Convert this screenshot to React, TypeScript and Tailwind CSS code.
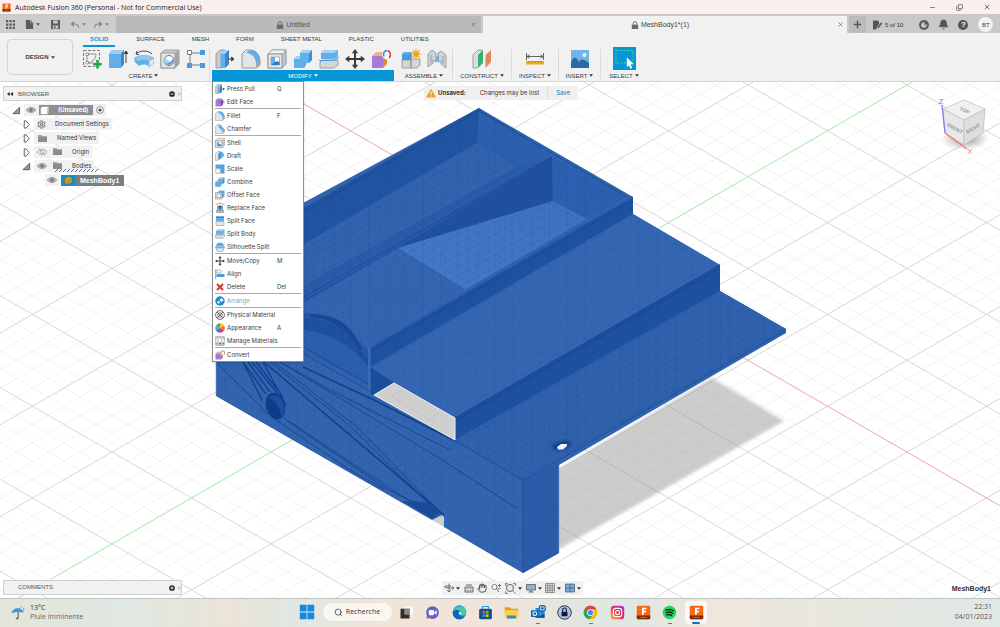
import React from "react";
import { Bell, Search, X, Minus, Copy, Plus, Hand, Settings } from "lucide-react";

type P = { className?: string };

const Svg = ({ className = "size-5", children }: { className?: string; children: React.ReactNode }) => (
  <svg viewBox="0 0 20 20" className={`${className} shrink-0`} aria-hidden="true">
    {children}
  </svg>
);

const B = "#62aee8";
const G = "#c9cbcd";
const D = "#8a8d90";

const icons: Record<string, React.ReactNode> = {
  sketch: (
    <>
      <path d="M1.500 1.500h16v16h-16z" fill="none" stroke="#777" strokeWidth="1" strokeDasharray="3 1.500" />
      <path d="M5 5v9M5 14h9M14 5c0 5-4 9-9 9M5 5h9" fill="none" stroke="#888" strokeWidth=".9" />
      <path d="M4 4h2.500v2.500H4zM4 12.500h2.500V15H4z" fill="#fff" stroke="#777" strokeWidth=".7" />
      <path d="M15.500 11v8.500M11.200 15.200h8.600" stroke="#f1f1f1" strokeWidth="4" />
      <path d="M15.500 11v8.500M11.200 15.200h8.600" stroke="#1fa64a" strokeWidth="2.600" />
    </>
  ),
  extrude: (
    <>
      <path d="M1 5l3-4h12v14l-3 4H1z" fill="#3d87c7" />
      <path d="M1 5l3-4h12l-3 4z" fill="#9ccdf2" />
      <path d="M1 5h12v14H1z" fill={B} />
      <path d="M18 3v11M16.300 4.500L18 2l1.700 2.500z" fill="#333" stroke="#333" strokeWidth=".9" />
    </>
  ),
  revolve: (
    <>
      <path d="M2 5c4-4 12-4 16 0M2 5l1-3M2 5l3 .5" fill="none" stroke="#444" strokeWidth="1" />
      <path d="M0 9c5-4 15-4 20 0v4l-5 4c-3-2-7-2-10 0l-4-4z" fill={B} />
      <path d="M0 9c5-4 15-4 20 0l-4 3c-4-2-8-2-12 0z" fill="#91c7ef" />
      <path d="M15 12l5-3v5l-5 4z" fill="#e9eaeb" stroke="#999" strokeWidth=".6" />
    </>
  ),
  hole: (
    <>
      <path d="M1 4l4-3h14v14l-4 4H1z" fill={G} stroke={D} strokeWidth=".8" />
      <path d="M1 4h14v15H1z" fill="#e4e5e6" stroke={D} strokeWidth=".8" />
      <path d="M15 4l4-3v14l-4 4z" fill="#a2a5a8" />
      <circle cx="9" cy="11.500" r="5" fill="#fff" stroke="#777" />
      <path d="M4.800 14a5 5 0 008.400-5 7 7 0 01-8.400 5z" fill="#4b9ade" />
      <path d="M4.800 14a5 5 0 01.7-6c1 3 3 4 5 4.500-2 2-4 2-5.700 1.500z" fill="#a4d2f4" />
    </>
  ),
  pattern: (
    <>
      <path d="M4 4h12M4 4v12h12" fill="none" stroke="#777" />
      <path d="M1.500 1.500h4v4h-4z" fill="#fff" stroke="#777" />
      <path d="M14 1h5v5h-5zM1 14h5v5H1zM14 14h5v5h-5z" fill="#4b9ade" />
    </>
  ),
  press: (
    <>
      <path d="M1 5l4-4h5v14l-4 4H1z" fill={G} stroke={D} strokeWidth=".8" />
      <path d="M5.500 5l4-4h4.500v14l-4 4H5.500z" fill={B} />
      <path d="M5.500 5l4-4H14l-4 4z" fill="#a4d2f4" />
      <path d="M10 5l4-4v14l-4 4z" fill="#3c86c8" />
      <path d="M13 10h5M16.500 8l2.500 2-2.500 2z" stroke="#444" fill="#444" strokeWidth="1" />
    </>
  ),
  editface: (
    <>
      <path d="M1 7h11v12H1zM1 7l4-4h9l-2 4z" fill="#a779d9" />
      <path d="M12 7l4-3v11l-4 4z" fill="#8652c0" />
      <path d="M8 10h10M13 5v10M15 7l4 3-4 3z" stroke="#555" fill="#ddd" />
    </>
  ),
  fillet: (
    <>
      <path d="M1 5l4-4h4c6 0 10 5 10 11v4l-4 3H1z" fill="#e4e5e6" stroke={D} strokeWidth=".9" />
      <path d="M9 1c6 0 10 5 10 11l-4 3C15 9 11 4 5 4z" fill={B} />
      <path d="M15 15l4-3v4l-4 3z" fill="#a2a5a8" />
    </>
  ),
  chamfer: (
    <>
      <path d="M1 5l4-4h5l9 10v5l-4 3H1z" fill="#e4e5e6" stroke={D} strokeWidth=".9" />
      <path d="M10 1l9 10-4 4L6 5z" fill={B} />
      <path d="M15 15l4-4v5l-4 3z" fill="#a2a5a8" />
    </>
  ),
  shell: (
    <>
      <path d="M1 5l4-4h14v14l-4 4H1z" fill="#c3c6c8" stroke={D} strokeWidth=".9" />
      <path d="M1 5l4-4h14l-4 4z" fill="#f0f1f1" stroke={D} strokeWidth=".6" />
      <path d="M1 5h14v14H1z" fill="#e6e7e8" stroke={D} strokeWidth=".9" />
      <path d="M4 8h8.500v8H4z" fill="#fff" stroke={D} strokeWidth=".6" />
      <path d="M4 8l4 0v4.500L4 16z" fill={B} />
      <path d="M4 16l4-3.500h4.500V16z" fill="#2d7ec3" />
    </>
  ),
  draft: (
    <>
      <path d="M1 5l5-4h4l-2 14-3 4H1z" fill="#e4e5e6" stroke={D} strokeWidth=".9" />
      <path d="M7 5l4-4c4 0 7 4 8 8l-5 5-6 4z" fill={B} />
      <path d="M7 6l5-4-2 12-3 4z" fill="#3c86c8" />
    </>
  ),
  scale: (
    <>
      <path d="M1 1h18v18H11V9H1z" fill="#4fa3e3" />
      <path d="M1.500 9.500h9v9h-9z" fill="#fff" stroke="#777" />
    </>
  ),
  combine: (
    <>
      <path d="M1 10l3-3h3V4l3-3h9v10l-3 3h-3v2l-3 3H1z" fill="#3f8fd3" />
      <path d="M1 10h6V4h9v10h-4v5H1z" fill={B} />
      <path d="M7 4l3-3h9l-3 3zM1 10l3-3h3v3z" fill="#a4d2f4" />
    </>
  ),
  offset: (
    <>
      <path d="M6 4l3-3h10v12l-4 3z" fill={B} />
      <path d="M1 5h13v13H1z" fill="#e4e5e6" stroke="#777" />
      <path d="M4 8h7v7H4z" fill="#fff" stroke="#777" />
    </>
  ),
  replace: (
    <>
      <path d="M1 4c5-4 13-4 18 0" fill="none" stroke="#e7903c" strokeWidth="2" />
      <path d="M4 5h12v10H4z" fill={B} />
      <path d="M3 15h14v4H3z" fill="#bbb" stroke="#777" />
      <path d="M10 6v7M7 9l3-3 3 3" stroke="#222" fill="none" strokeWidth="1.500" />
    </>
  ),
  splitface: (
    <>
      <path d="M2 1h16v10H2z" fill={B} />
      <path d="M2 11h16v8H2z" fill="#e4e5e6" stroke={D} />
      <path d="M2 1h16v3H2z" fill="#3c86c8" />
    </>
  ),
  split: (
    <>
      <path d="M1 13l3-2h15v5l-4 3H1z" fill="#d5d7d9" stroke={D} strokeWidth=".8" />
      <path d="M2 4l3-3h14v6l-4 3H2z" fill={B} />
      <path d="M2 4l3-3h14l-4 3z" fill="#a4d2f4" />
      <path d="M0 11.500h15l4.500-3.500" fill="none" stroke="#4b9ade" strokeWidth="1.200" />
    </>
  ),
  silhouette: (
    <>
      <path d="M2 9a8 8 0 0116 0z" fill={B} />
      <path d="M2 12a8 8 0 0016 0z" fill="#dfe7ee" stroke="#4b9ade" />
      <path d="M0 10.500h20" stroke="#4b9ade" strokeWidth="2" />
    </>
  ),
  move: (
    <path
      d="M10 0l3.200 4.300H11V9h4.700V6.800L20 10l-4.300 3.200V11H11v4.700h2.200L10 20l-3.200-4.300H9V11H4.300v2.200L0 10l4.300-3.200V9H9V4.300H6.800z"
      fill="#3b3b3b"
    />
  ),
  align: (
    <>
      <path d="M1.500 0v20" stroke="#777" strokeWidth="1.500" />
      <path d="M4 2h8v6H4z" fill="#fff" stroke="#777" />
      <path d="M3 10h16v6H3z" fill="#4b9ade" />
    </>
  ),
  delete: <path d="M4 4l12 12M16 4L4 16" stroke="#e03030" strokeWidth="4" />,
  arrange: (
    <>
      <circle cx="10" cy="10" r="9.500" fill="#1b8fd2" />
      <path d="M4 12.500l3-3 3 3-3 3zM9 8l4-4 4 4-4 4z" fill="#fff" />
    </>
  ),
  material: (
    <>
      <circle cx="10" cy="10" r="8.800" fill="#fff" stroke="#444" strokeWidth="1.600" />
      <path d="M4 4l12 12M16 4L4 16" stroke="#444" strokeWidth="1.300" />
      <circle cx="10" cy="10" r="4.500" fill="none" stroke="#444" strokeWidth="1.500" />
    </>
  ),
  appearance: (
    <>
      <path d="M10 10V.5a9.500 9.500 0 018.200 4.800z" fill="#f6c22d" />
      <path d="M10 10l8.200-4.700a9.500 9.500 0 010 9.500z" fill="#ef6b35" />
      <path d="M10 10l8.200 4.800A9.500 9.500 0 0110 19.500z" fill="#d93a7e" />
      <path d="M10 10v9.500a9.500 9.500 0 01-8.200-4.700z" fill="#4a6be0" />
      <path d="M10 10l-8.200 4.800a9.500 9.500 0 010-9.500z" fill="#2fb6d8" />
      <path d="M10 10L1.800 5.300A9.500 9.500 0 0110 .5z" fill="#44b649" />
    </>
  ),
  manage: (
    <>
      <path d="M1.500 1.500h17v17h-17z" fill="#fff" stroke="#888" strokeWidth="1.300" />
      <path d="M1 3.500h18M6 4v15M13.500 4v15" stroke="#888" strokeWidth="1.200" />
      <path d="M8 13h4v4H8zM15 13h3v4h-3zM3 13h2v4H3z" fill="#777" />
    </>
  ),
  convert: (
    <>
      <path d="M1 7l4-4h11l-4 4z" fill="#e8b679" />
      <path d="M1 7h11v12H1z" fill="#a779d9" />
      <path d="M12 7l4-4v12l-4 4z" fill="#d78c40" />
      <circle cx="16" cy="5.500" r="5" fill="#f6f6f6" />
      <path d="M13 7.500c-1.500-3 0-5.500 3-6" fill="none" stroke="#2d8fe0" strokeWidth="1.600" />
      <path d="M16.500 1.500c3 1 4 5 1.500 7.500" fill="none" stroke="#e53935" strokeWidth="1.600" />
    </>
  ),
  component: (
    <>
      <path d="M1 5l2-2h8v7H1z" fill={B} />
      <path d="M1 11h9v8H1zM10 11l2-1h7v6l-3 3h-6z" fill="#d5d7d9" stroke={D} strokeWidth=".8" />
      <path d="M1 5h9v6H1z" fill="#4b9ade" />
      <circle cx="15" cy="5" r="2.800" fill="#f5a416" />
      <path d="M15 0v10M10 5h10M11.500 1.500l7 7M18.500 1.500l-7 7" stroke="#f5a416" strokeWidth="1.200" />
    </>
  ),
  joint: (
    <>
      <path d="M1 5l4-4 4 3v9l-3-2v3l-5 4zM4 6v8" fill="#d0d2d4" stroke={D} strokeWidth=".8" />
      <path d="M11 4l3-2 5 4v13l-5-4v-3l-3 1zM16 7v8" fill="#d0d2d4" stroke={D} strokeWidth=".8" />
      <path d="M9 8l3-2v5l-3 2z" fill={B} />
    </>
  ),
  construct: (
    <>
      <path d="M1 6l5-5h4v13l-5 5H1z" fill="#dcdedf" stroke={D} strokeWidth=".8" />
      <path d="M6 6l5-5v13l-5 5z" fill="#34b36a" />
      <path d="M13.500 6l5.500-5v12l-5.500 6z" fill="#e1875a" />
    </>
  ),
  inspect: (
    <>
      <path d="M1.500 4v7M18.500 4v7M2 7.500h16M4.500 5.800L2 7.500l2.500 1.700M15.500 5.800L18 7.500l-2.500 1.700" fill="none" stroke="#555" strokeWidth=".9" />
      <path d="M1 12h18v3.500H1z" fill="#f5a81c" />
      <path d="M4 12v1.500M7 12v1.500M10 12v1.500M13 12v1.500M16 12v1.500" stroke="#8c5a00" strokeWidth=".8" />
    </>
  ),
  insert: (
    <>
      <path d="M1 1h18v18H1z" fill="#6fb5ec" />
      <path d="M1 13c3-6 5-5 8 0 2-4 5-3 10 1v5H1z" fill="#2a6aa6" />
      <circle cx="14.500" cy="6" r="2" fill="#fdf6c9" />
    </>
  ),
};

const Icon = ({ name, className }: { name: string; className?: string }) => <Svg className={className}>{icons[name]}</Svg>;

const Caret = () => (
  <svg viewBox="0 0 6 4" className="ml-0.5 h-[3px] w-1 shrink-0" aria-hidden="true">
    <path d="M0 0h6L3 4z" fill="currentColor" />
  </svg>
);

const LockIcon = () => (
  <Svg className="size-2">
    <path d="M2 9h16v11H2z" fill="#6b6b6b" />
    <path d="M5.500 9V6a4.500 4.500 0 019 0v3" fill="none" stroke="#6b6b6b" strokeWidth="2.400" />
  </Svg>
);

const CurveArrow = ({ flip }: { flip?: boolean }) => (
  <Svg className={flip ? "size-[10px] -scale-x-100" : "size-[10px]"}>
    <path d="M4 8h7q6 1 6 8" fill="none" stroke="#858585" strokeWidth="2.200" />
    <path d="M8 2L1 8l7 6z" fill="#858585" />
  </Svg>
);

const FusionLogo = ({ className = "size-4" }: P) => (
  <Svg className={className}>
    <rect x="1" y="1" width="18" height="18" rx="2" fill="#f26a11" />
    <path d="M1 14h18v3a2 2 0 01-2 2H3a2 2 0 01-2-2z" fill="#7d2b05" />
    <path d="M8 3.500h6v2h-3.500v2h3v2h-3V13H8z" fill="#fff" />
    <path d="M6 16.500h8" stroke="#d8733a" strokeWidth="1.200" />
  </Svg>
);

type Item = { icon: string; label: string; key?: string; off?: boolean };
const menu: Item[][] = [
  [{ icon: "press", label: "Press Pull", key: "Q" }, { icon: "editface", label: "Edit Face" }],
  [{ icon: "fillet", label: "Fillet", key: "F" }, { icon: "chamfer", label: "Chamfer" }],
  [
    { icon: "shell", label: "Shell" },
    { icon: "draft", label: "Draft" },
    { icon: "scale", label: "Scale" },
    { icon: "combine", label: "Combine" },
    { icon: "offset", label: "Offset Face" },
    { icon: "replace", label: "Replace Face" },
    { icon: "splitface", label: "Split Face" },
    { icon: "split", label: "Split Body" },
    { icon: "silhouette", label: "Silhouette Split" },
  ],
  [
    { icon: "move", label: "Move/Copy", key: "M" },
    { icon: "align", label: "Align" },
    { icon: "delete", label: "Delete", key: "Del" },
  ],
  [{ icon: "arrange", label: "Arrange", off: true }],
  [
    { icon: "material", label: "Physical Material" },
    { icon: "appearance", label: "Appearance", key: "A" },
    { icon: "manage", label: "Manage Materials" },
  ],
  [{ icon: "convert", label: "Convert" }],
];

function ModifyMenu() {
  return (
    <div role="menu" className="absolute left-0.5 top-full z-20 w-[92px] border border-[#8d8d8d] bg-white px-0.5 text-[#3c3c3c] shadow-sm">
      {menu.map((group, i) => (
        <div key={i} className={i ? "border-t border-[#a9a9a9]" : ""}>
          {group.map((m) => (
            <button
              key={m.label}
              role="menuitem"
              disabled={m.off}
              className={`flex h-[13px] w-full items-center gap-0.5 font-[Inter,sans-serif] text-[6px] leading-none whitespace-nowrap ${m.off ? "text-[#999]" : ""}`}
            >
              <Icon name={m.icon} className="size-[10px]" />
              <span className="w-[48px] text-left">{m.label}</span>
              {m.key && <span>{m.key}</span>}
            </button>
          ))}
        </div>
      ))}
    </div>
  );
}

function TitleBar() {
  return (
    <header className="flex h-[14px] items-center bg-[#f9efec] pl-0.5 pr-[9px] text-[#333]">
      <FusionLogo className="size-[9px]" />
      <h1 className="ml-1 flex-1 font-['Open_Sans',sans-serif] text-[7px] leading-none text-[#222]">
        Autodesk Fusion 360 (Personal - Not for Commercial Use)
      </h1>
      <div className="flex items-center gap-[20px]">
        <button aria-label="Minimize"><Minus className="size-[7px]" /></button>
        <button aria-label="Restore"><Copy className="size-[7px] -scale-x-100 rotate-180" /></button>
        <button aria-label="Close"><X className="size-2" /></button>
      </div>
    </header>
  );
}

function TabBar() {
  return (
    <div className="flex h-[19px] bg-[#c9c9c9] pt-0.5 text-[7px] leading-none text-[#555]">
      <div className="flex w-[116px] shrink-0 items-center bg-[#cdcdcd] pl-1.5">
        <button aria-label="Data panel">
          <Svg className="size-[9px]"><path d="M0 0h5v5H0zM7.500 0h5v5h-5zM15 0h5v5h-5zM0 7.500h5v5H0zM7.500 7.500h5v5h-5zM15 7.500h5v5h-5zM0 15h5v5H0zM7.500 15h5v5h-5zM15 15h5v5h-5z" fill="#5c5c5c" /></Svg>
        </button>
        <button aria-label="File" className="ml-[10px] flex items-center">
          <Svg className="size-[9px]"><path d="M2 0h10l6 6v14H2z" fill="#5c5c5c" /><path d="M12 0v6h6" stroke="#ccc" fill="none" /></Svg>
          <Caret />
        </button>
        <button aria-label="Save" className="ml-[11px]">
          <Svg className="size-[9px]"><path d="M0 0h20v20H0z" fill="#5c5c5c" /><path d="M5 1h10v7H5zM4 12h12v7H4z" fill="#ccc" /><path d="M7 13h3v5H7z" fill="#5c5c5c" /></Svg>
        </button>
        <button aria-label="Undo" className="ml-[10px] flex items-center text-[#858585]"><CurveArrow /><Caret /></button>
        <button aria-label="Redo" className="ml-[7px] flex items-center text-[#858585]"><CurveArrow flip /><Caret /></button>
      </div>
      <div className="flex flex-[365] items-center bg-[#b9b9b9] pr-1">
        <button className="flex flex-1 items-center justify-center gap-0.5"><LockIcon />Untitled</button>
        <button aria-label="Close Untitled"><X className="size-[7px]" /></button>
      </div>
      <div className="ml-0.5 flex flex-[365] items-center bg-[#f1f1f1] pr-[3px] text-[#444]">
        <button className="flex flex-1 items-center justify-center gap-0.5"><LockIcon />MeshBody1*(1)</button>
        <button aria-label="Close MeshBody1"><X className="size-[7px]" /></button>
      </div>
      <div className="ml-0.5 flex w-[151px] shrink-0 items-center">
        <button aria-label="New tab" className="flex h-full w-[17px] items-center justify-center bg-[#bbb]"><Plus className="size-[11px]" strokeWidth={3} /></button>
        <button className="ml-[7px] flex items-center gap-0.5 text-[6px] text-[#333]">
          <Svg className="size-[10px]"><path d="M0 1h9l3 3v4l-6 11H0z" fill="#555" /><path d="M8 18l1-5 7-9 3 3-7 9z" fill="#555" stroke="#ccc" /></Svg>
          5 of 10
        </button>
        <button aria-label="Job status" className="ml-[16px]">
          <Svg className="size-[10px]"><circle cx="10" cy="10" r="10" fill="#5c5c5c" /><path d="M10 4.500a5.500 5.500 0 105.500 6H10z" fill="#ccc" /><path d="M11.500 4v5h5" stroke="#ccc" strokeWidth="1" fill="none" /></Svg>
        </button>
        <button aria-label="Notifications" className="ml-[9px]"><Bell className="size-[11px] fill-[#555]" /></button>
        <button aria-label="Help" className="ml-[9px] flex size-[10px] items-center justify-center rounded-full bg-[#555] text-[8px] font-bold text-white">?</button>
        <button className="ml-[10px] flex size-[15px] items-center justify-center rounded-full bg-[#f2f2f2] text-[6px] text-[#444]">BT</button>
      </div>
    </div>
  );
}

const Group = ({ width, label, names, active, children }: { width: string; label: string; names: string[]; active?: boolean; children?: React.ReactNode }) => (
  <div className={`${width} relative flex shrink-0 flex-col items-center`}>
    <div className="flex flex-1 items-center gap-[6px]">
      {names.map((n) => (
        <button key={n} aria-label={n}><Icon name={n} className="block size-5" /></button>
      ))}
      {label === "SELECT" && (
        <button aria-label="select tool" className="block size-[23px] bg-[#0696d7]">
          <Svg className="block size-full"><path d="M2.500 3h15v11h-15z" fill="none" stroke="#4fd08a" strokeWidth=".9" strokeDasharray="2 1.200" /><path d="M12 9l6 6-2.700.2 1.400 3-1.600.7-1.300-3-1.800 1.800z" fill="#fff" /></Svg>
        </button>
      )}
    </div>
    <button className={`flex h-[11px] items-center justify-center leading-none ${active ? "w-[182px] bg-[#0696d7] text-white" : ""}`}>
      {label}
      <Caret />
    </button>
    {children}
  </div>
);

const Rule = () => <i className="my-0.5 w-px shrink-0 bg-[#dadada]" />;

function Ribbon() {
  const tabs = ["SOLID", "SURFACE", "MESH", "FORM", "SHEET METAL", "PLASTIC", "UTILITIES"];
  return (
    <div className="relative z-10 flex h-[49px] border-b border-[#d5d5d5] bg-[#f1f1f1] text-[6px] text-[#3a3a3a]">
      <button className="ml-[7px] mr-[5px] mt-[6px] flex h-[36px] w-[66px] shrink-0 items-center justify-center rounded-sm border border-[#d4d4d4] font-bold">
        DESIGN <Caret />
      </button>
      <div className="flex flex-col">
        <nav className="flex h-[14px] gap-[15px] pl-[5px]">
          {tabs.map((t, i) => (
            <button key={t} className={`flex items-center border-b-2 leading-none ${i === 0 ? "border-[#0696d7] px-[7px] font-bold text-[#0696d7]" : "border-transparent px-[6px]"}`}>{t}</button>
          ))}
        </nav>
        <div className="flex flex-1">
          <Group width="w-[131px]" label="CREATE" names={["sketch", "extrude", "revolve", "hole", "pattern"]} />
          <Rule />
          <Group width="w-[186px]" label="MODIFY" names={["press", "fillet", "shell", "combine", "split", "move", "convert"]} active>
            <ModifyMenu />
          </Group>
          <Group width="w-[56px]" label="ASSEMBLE" names={["component", "joint"]} />
          <Rule />
          <Group width="w-[58px]" label="CONSTRUCT" names={["construct"]} />
          <Rule />
          <Group width="w-[46px]" label="INSPECT" names={["inspect"]} />
          <Rule />
          <Group width="w-[41px]" label="INSERT" names={["insert"]} />
          <Rule />
          <Group width="w-[46px]" label="SELECT" names={[]} />
        </div>
      </div>
    </div>
  );
}

const OX = 589;
const OY = 268.5;
const DX = 79.5;
const DY = 45.9;

function gridPath(step: number, from: number, to: number, skip: number) {
  let d = "";
  for (let k = from; k <= to; k++) {
    if (skip && k % skip === 0) continue;
    const x = OX + (k * DX) / step;
    const down = OY + (k * DY) / step;
    const up = OY - (k * DY) / step;
    d += `M${x - 12 * DX} ${down + 12 * DY}L${x + 12 * DX} ${down - 12 * DY}`;
    d += `M${x - 12 * DX} ${up - 12 * DY}L${x + 12 * DX} ${up + 12 * DY}`;
  }
  return d;
}

function Model() {
  return (
    <svg viewBox="0 82 1000 516" preserveAspectRatio="xMidYMid slice" className="absolute inset-0 size-full" role="img" aria-label="MeshBody1 in perspective">
      <defs>
        <pattern id="mesh" width="18" height="10.400" patternUnits="userSpaceOnUse">
          <path d="M0 0l18 10.400M0 10.400L18 0M9 0v10.400M0 0v10.400" stroke="#143f86" strokeWidth=".5" fill="none" />
        </pattern>
        <pattern id="fine" width="11" height="6.350" patternUnits="userSpaceOnUse">
          <path d="M0 0l11 6.350M0 6.350L11 0M5.500 0v6.350" stroke="#143f86" strokeWidth=".4" fill="none" />
        </pattern>
        <filter id="soft"><feGaussianBlur stdDeviation="1.500" /></filter>
        <linearGradient id="lit" x1="0" y1="1" x2="1" y2="0">
          <stop offset="0" stopColor="#477bc9" /><stop offset="1" stopColor="#3f73c1" />
        </linearGradient>
      </defs>
      <path d={gridPath(5, -60, 60, 5)} stroke="#f0f0f0" strokeWidth=".8" />
      <path d={gridPath(1, -12, 12, 0)} stroke="#d2d2d2" strokeWidth=".9" />
      <path d={`M${OX - 8 * DX} ${OY + 8 * DY}L${OX + 8 * DX} ${OY - 8 * DY}`} stroke="#a4f7a4" strokeWidth=".9" />
      <path d={`M${OX - 8 * DX} ${OY - 8 * DY}L${OX + 8 * DX} ${OY + 8 * DY}`} stroke="#fbadad" strokeWidth=".9" />
      <path d="M712 378L784 421 559 549 540 480z" fill="#8f8f8f" fillOpacity=".46" filter="url(#soft)" />
      <path d="M216 250L479 108 633 197V214L720 265V291L786 329V333L559 465V553L523 573 444 527V517L432 520 216 396z" fill="#3264af" />
      <path d="M432 520L442 515 444 517V527z" fill="#cfcfcf" />
      <path d="M479 108L304 208V244L477 143z" fill="#2154a2" />
      <path d="M479 108L477 143 519 169 552 156z" fill="#2c5fae" />
      <path d="M479 111L304 212M479 111L629 198" stroke="#174691" strokeWidth=".8" />
      <path d="M552 157L304 300 308 307 398 248 553 201z" fill="#1f519f" />
      <path d="M515 168L552 157 520 176 398 247 304 300V285z" fill="#2a5caa" />
      <path d="M552 157L304 297" stroke="#174691" strokeWidth=".8" />
      <path d="M553 157L629 199 587 219 553 201z" fill="#2c60b0" />
      <path d="M398 248L553 201 587 219 466 290z" fill="url(#lit)" />
      <path d="M398 248L466 290 370 346 362 351 352 334Q335 315 304 313V302z" fill="#3465b0" />
      <path d="M304 313Q340 312 356 338L368 350V386L304 345z" fill="#2558a6" />
      <path d="M310 314Q345 314 358 341L362 350 355 348Q340 318 310 317z" fill="#174895" />
      <path d="M304 318Q345 320 357 347L368 358V367Q340 335 304 331z" fill="#1e51a0" />
      <path d="M304 330Q345 335 368 367V386L304 350z" fill="#2c5fae" />
      <path d="M304 347L368 384" stroke="#174691" strokeWidth=".8" />
      <path d="M633 197V214L370 367V347z" fill="#1f529f" />
      <path d="M633 197L370 348 368 346 629 195z" fill="#3163b0" />
      <path d="M633 200L371 351" stroke="#174691" strokeWidth=".8" />
      <path d="M633 214L720 265 455 418 372 367z" fill="#3466b2" />
      <path d="M720 265V291L455 440V418z" fill="#1e519f" />
      <path d="M720 265L455 418M720 268L455 421" stroke="#154490" strokeWidth="1" />
      <path d="M455 440L720 291 786 329 523 479z" fill="#3062ae" />
      <path d="M370 367L394 383 374 395 370 394z" fill="#1b4e9b" />
      <path d="M368 347h2.500V395l-2.500-2z" fill="#3d70be" />
      <path d="M523 481L559 462V553L523 573z" fill="#2b5ca9" />
      <path d="M786 330L523 480.500 375 394 304 354" fill="none" stroke="#1d4f9d" strokeWidth="1" />
      <path d="M523 481V573" stroke="#1e509e" strokeWidth=".8" />
      <path d="M216 250L479 108 633 197V214L720 265V291L786 329V333L559 465V553L523 573 444 527V517L432 520 216 396z" fill="url(#mesh)" opacity=".28" />
      <path d="M398 248L553 201 587 219 466 290zM455 440L720 291 786 329 523 479zM304 244L477 143 519 169 304 295z" fill="url(#fine)" opacity=".2" />
      <g stroke="#10408d" fill="none" strokeWidth=".8">
        <path d="M243 362L266 394M248 362L270 392M256 362L283 397M263 362L286 405M243 362L262 400M252 362L278 394" strokeWidth="1.300" />
        <path d="M218 364L268 414M270 362L350 426 440 515M274 362L357 427 442 514M280 362L444 461 516 508M280 362L330 390 450 450M286 420L385 488M284 418L400 495 430 512M270 416L350 470 385 490M385 488L415 503 436 507" />
        <path d="M303 367L374 400 455 441" strokeWidth="1.500" />
        <path d="M264 362L444 515" strokeWidth="1.600" />
      </g>
      <ellipse cx="275.500" cy="406" rx="9.500" ry="13.500" transform="rotate(-18 275.500 406)" fill="#0f3c88" />
      <path d="M268 398q9 0 14 20 6-8-1-19-6-7-13-1z" fill="#1c4f9f" />
      <path d="M402 501q24 0 30 4l8 7-7 7z" fill="#1a4b98" />
      <path d="M374 395L394 383 455 418V440z" fill="#cfcfcf" stroke="#f2f2f2" strokeWidth="1" />
      <path d="M386 393l50 30M402 390l-10 6M440 412l-14 9" stroke="#bdbdbd" strokeWidth=".6" />
      <path d="M551 447q10-9 21-5l-3 5-12 4z" fill="#10408d" filter="url(#soft)" />
      <path d="M557 447l4-3h6v2l-4 3.500h-5z" fill="#f4f4f4" />
      <path d="M216 362V396M559 465V553" stroke="#7fa3d8" strokeWidth=".6" />
    </svg>
  );
}

function ViewCube() {
  return (
    <svg viewBox="0 0 60 66" className="absolute right-[11px] top-[10px] h-[66px] w-[60px]" role="img" aria-label="View cube">
      <defs>
        <radialGradient id="cs"><stop offset="0" stopColor="#777" stopOpacity=".8" /><stop offset="1" stopColor="#888" stopOpacity="0" /></radialGradient>
      </defs>
      <ellipse cx="36" cy="47" rx="24" ry="11" fill="url(#cs)" />
      <path d="M14 17L35 8 56 17 35 28z" fill="#f1f1f1" stroke="#bbb" strokeWidth=".7" />
      <path d="M14 17L35 28V53L16 41z" fill="#e8e8e8" stroke="#bbb" strokeWidth=".7" />
      <path d="M35 28L56 17 54 41 35 53z" fill="#dedede" stroke="#bbb" strokeWidth=".7" />
      <path d="M13 13L16 41" stroke="#7c7cf5" strokeWidth="1.300" />
      <path d="M16 41L38 57" stroke="#f17878" strokeWidth="1.300" />
      <g fontFamily="Liberation Sans, sans-serif" fontSize="5" fill="#999" textAnchor="middle" fontWeight="bold">
        <text transform="translate(35 20) rotate(24)">TOP</text>
        <text transform="translate(25 38) rotate(28)">FRONT</text>
        <text transform="translate(45 38) rotate(-30)">RIGHT</text>
      </g>
      <g fontFamily="Liberation Sans, sans-serif" fontSize="8" textAnchor="middle">
        <text x="12" y="12" fill="#7c7cf5">Z</text>
        <text x="41" y="62" fill="#f17878">X</text>
      </g>
    </svg>
  );
}

const Eye = ({ off }: { off?: boolean }) => (
  <Svg className="size-[10px]">
    <path d="M0 10q10-11 20 0-10 11-20 0z" fill={off ? "#eee" : "#b5b5b5"} stroke="#999" strokeWidth="1.500" />
    <circle cx="10" cy="10" r="3.500" fill={off ? "#fff" : "#777"} stroke="#888" />
    {off && <path d="M3 3l14 14" stroke="#999" strokeWidth="1.500" />}
  </Svg>
);
const Folder = () => <Svg className="h-[9px] w-[11px]"><path d="M0 3h8l2 2h10v13H0z" fill="#8b8b8b" /><path d="M0 6h20" stroke="#b5b5b5" /></Svg>;
const Twist = ({ open }: { open?: boolean }) => (
  <button aria-label={open ? "Collapse" : "Expand"} className="shrink-0">
    <Svg className="block size-[9px]">{open ? <path d="M17 3v14H2z" fill="#999" stroke="#333" strokeWidth="1.500" /> : <path d="M5 2h4l7 8-7 8H5z" fill="#fff" stroke="#444" strokeWidth="1.800" />}</Svg>
  </button>
);
const Dot = ({ plus }: { plus?: boolean }) => (
  <Svg className="size-[6px]"><circle cx="10" cy="10" r="9.500" fill="#222" /><path d={plus ? "M5 10h10M10 5v10" : "M5 10h10"} stroke="#fff" strokeWidth="3" /></Svg>
);
const Grip = () => (
  <Svg className="ml-[3px] h-2 w-[3px]"><path d="M3 0v20M14 0v20" stroke="#aaa" strokeWidth="5" /></Svg>
);

const row = "flex h-[14px] items-center gap-[3px]";
const chip = "flex h-3 items-center gap-[9px] bg-[#f1f1f1] px-[3px]";

function Browser() {
  return (
    <aside className="absolute left-[3px] top-1 w-[179px] font-[Inter,sans-serif] text-[6px] leading-none text-[#333]">
      <div className="flex h-[15px] items-center border border-[#d0d0d0] bg-[#f1f1f1] pl-[3px]">
        <button aria-label="Collapse browser"><Svg className="block size-[6px]"><path d="M9 3v14L0 10zM20 3v14l-9-7z" fill="#222" /></Svg></button>
        <h2 className="ml-[5px] flex-1 font-['Liberation_Sans',sans-serif] text-[#555]">BROWSER</h2>
        <Dot />
        <Grip />
      </div>
      <div className="mt-0.5 pl-[9px]">
        <div className={row}>
          <Twist open />
          <div className="flex h-3 items-center gap-[3px] bg-[#f1f1f1] px-[2px]">
            <Eye />
            <span className="flex h-[10px] items-center gap-[9px] bg-[#8f8f8f] pr-[5px] pl-px font-bold text-white">
              <Svg className="size-[9px]"><path d="M1 5l4-4h14v14l-4 4H1z" fill="#fff" stroke="#777" /><path d="M15 5l4-4v14l-4 4z" fill="#ccc" /></Svg>
              (Unsaved)
            </span>
            <Svg className="size-2"><circle cx="10" cy="10" r="8.500" fill="#fff" stroke="#444" strokeWidth="1.500" /><circle cx="10" cy="10" r="4" fill="#444" /></Svg>
          </div>
        </div>
        <div className={`${row} pl-[10px]`}><Twist /><div className={chip}><Settings className="size-[9px] text-[#888]" strokeWidth={3} />Document Settings</div></div>
        <div className={`${row} pl-[10px]`}><Twist /><div className={chip}><Folder />Named Views</div></div>
        <div className={`${row} pl-[10px]`}><Twist /><div className={chip}><span className="flex gap-[5px]"><Eye off /><Folder /></span>Origin</div></div>
        <div className={`${row} pl-[10px]`}>
          <Twist open />
          <div className={`${chip} relative`}>
            <span className="flex gap-[5px]"><Eye /><Folder /></span>Bodies
            <svg viewBox="0 0 46 4" className="absolute bottom-0 right-[-6px] h-1 w-[46px]" aria-hidden="true">
              <path d="M1 4l3-3M5 4l3-3M9 4l3-3M13 4l3-3M17 4l3-3M21 4l3-3M25 4l3-3M29 4l3-3M33 4l3-3M37 4l3-3M41 4l3-3" stroke="#5b7396" strokeWidth="1" />
            </svg>
          </div>
        </div>
        <div className={`${row} pl-[33px]`}>
          <div className="flex h-3 items-center bg-[#f1f1f1] px-[2px]"><Eye /></div>
          <div className="-ml-px flex h-[11px] items-center bg-[#7d7d7d] pr-[5px] font-['Liberation_Sans',sans-serif] text-[7px] font-bold text-white">
            <span className="mr-1 flex h-full w-[15px] items-center justify-center bg-[#0696d7]">
              <Svg className="size-[9px]"><path d="M1 6l8-5 9 2v11l-7 5-10-3z" fill="#d6a23a" stroke="#6b4a0b" /><path d="M1 6l9 3 8-6M10 9v10M1 11l9 3 8-6" stroke="#8a6418" fill="none" /></Svg>
            </span>
            MeshBody1
          </div>
        </div>
      </div>
    </aside>
  );
}

function NavBar() {
  const s = "#666";
  return (
    <div className="absolute bottom-[3px] left-[442px] flex h-[14px] w-[141px] items-center justify-between bg-[#f0f0f0] px-[2px] text-[#333]">
      <button aria-label="Orbit" className="flex items-center"><Svg className="size-[10px]"><path d="M10 1v17M6 14l4 4 4-4M16 7l4 3-4 3" stroke={s} strokeWidth="1.800" fill="none" /><path d="M19 10H9q-8 0-8-2t5-2h8" fill="none" stroke={s} strokeWidth="2" /></Svg><Caret /></button>
      <button aria-label="Look at"><Svg className="size-[10px]"><path d="M2 8h16v10H2zM4 4h12" fill="#ddd" stroke={s} strokeWidth="2" /><path d="M6 11h8v4H6z" fill="#fff" stroke={s} /></Svg></button>
      <button aria-label="Pan"><Hand className="size-[10px]" /></button>
      <button aria-label="Zoom"><Svg className="size-[10px]"><circle cx="7" cy="8" r="5" fill="#fff" stroke={s} strokeWidth="1.800" /><path d="M11 12l5 6M14 5h6M17 2v6M14 11h5" stroke={s} strokeWidth="1.800" /></Svg></button>
      <button aria-label="Fit" className="flex items-center"><Svg className="size-[11px]"><circle cx="9" cy="9" r="6.500" fill="#dfeaf4" stroke={s} strokeWidth="1.800" /><path d="M14 14l5 5M1 5V1h4M15 1h4v4M1 15v4h4" stroke={s} strokeWidth="1.600" fill="none" /></Svg><Caret /></button>
      <button aria-label="Display settings" className="flex items-center"><Svg className="size-[10px]"><path d="M1 3h18v11H1z" fill="#8db2da" stroke={s} strokeWidth="1.800" /><path d="M10 14v4M5 18h10" stroke={s} strokeWidth="2" /></Svg><Caret /></button>
      <button aria-label="Grid" className="flex items-center"><Svg className="size-[10px]"><path d="M1 1h18v18H1zM1 5.500h18M1 10h18M1 14.500h18M5.500 1v18M10 1v18M14.500 1v18" fill="#eee" stroke="#777" strokeWidth="1.500" /></Svg><Caret /></button>
      <button aria-label="Viewports" className="flex items-center"><Svg className="size-[10px]"><path d="M1 2h18v16H1z" fill="#7fa9d6" stroke="#44617f" strokeWidth="1.500" /><path d="M10 2v16M1 10h18" stroke="#44617f" strokeWidth="1.500" /></Svg><Caret /></button>
    </div>
  );
}

function Canvas() {
  return (
    <main className="relative min-h-[516px] flex-1 overflow-hidden bg-white">
      <Model />
      <ViewCube />
      <Browser />
      <div className="absolute left-[424px] top-1 flex h-[14px] items-center bg-[#f0f0f0] pl-0.5 font-[Inter,sans-serif] text-[6px] leading-none text-[#333]">
        <Svg className="size-[10px]"><path d="M10 1l10 18H0z" fill="#f5a11c" /><path d="M10 7v6M10 15v2" stroke="#fff" strokeWidth="2" /></Svg>
        <strong className="ml-[2px]">Unsaved:</strong>
        <span className="ml-[14px]">Changes may be lost</span>
        <button className="ml-2 h-full border-l border-[#ddd] px-2 text-[#0a78b8]">Save</button>
      </div>
      <div className="absolute bottom-[3px] left-[3px] flex h-[15px] w-[179px] items-center border border-[#d0d0d0] bg-[#f1f1f1] pl-[14px] text-[6px] text-[#555]">
        <h2 className="flex-1">COMMENTS</h2>
        <Dot plus />
        <Grip />
      </div>
      <NavBar />
      <div className="absolute bottom-[6px] right-[9px] text-[7px] font-bold leading-none text-[#333]">MeshBody1</div>
    </main>
  );
}

const apps: { name: string; art: React.ReactNode; run?: boolean }[] = [
  { name: "Task view", art: <><path d="M7 2h12v11H7z" fill="#fafafa" /><path d="M2 5h12v13H2z" fill="#2e2e2e" /><path d="M7 5h7v8H7z" fill="#8a8a8a" /></> },
  { name: "Chat", art: <><circle cx="10" cy="10" r="8.500" fill="#6463c0" /><path d="M2 18l1-6 5 5z" fill="#6463c0" /><rect x="5" y="6.500" width="7" height="7" rx="1.500" fill="#fff" /><path d="M12.500 9l3-2v6l-3-2z" fill="#fff" /></> },
  { name: "Edge", art: <><circle cx="10" cy="10" r="9" fill="#1c86d6" /><path d="M1 9C3-2 19-1 19 10c0 4-5 5-7 3 1-3-2-6-6-6-2 0-4 1-5 2z" fill="#48cba0" /><path d="M1.500 7C4-2 15-1 17.500 5 13 1 6 2 1.500 7z" fill="#2ba6dc" /><path d="M1 9c3-3 8-3 10 0-4 0-5 7 5 7.500C10 22 0 18 1 9z" fill="#1461b4" /><path d="M9.500 9c3 0 3.500 3 2.500 4.500-2-.5-3.500-3-2.500-4.500z" fill="#e8f4f8" /></> },
  { name: "Store", art: <><path d="M6 5V2h8v3" fill="none" stroke="#2ba1e3" strokeWidth="1.500" /><rect x="1.500" y="5" width="17" height="14" rx="2" fill="#15508b" /><path d="M6 8h3.500v3.500H6z" fill="#f25022" /><path d="M10.500 8H14v3.500h-3.500z" fill="#7fba00" /><path d="M6 12.500h3.500V16H6z" fill="#00a4ef" /><path d="M10.500 12.500H14V16h-3.500z" fill="#ffb900" /></> },
  { name: "Explorer", art: <><path d="M1 3h7l2 2h9v4H1z" fill="#e3a21a" /><path d="M1 7h18v11H1z" fill="#fcd04f" /><path d="M4 14h12v4H4z" fill="#2d8adb" /></> },
  { name: "Outlook", run: true, art: <><path d="M6 4h12v13H6z" fill="#2b8fe0" /><path d="M6 11l6 4 6-4v6H6z" fill="#134f92" /><path d="M0 7h10v9H0z" fill="#0f66b7" /><circle cx="5" cy="11.500" r="2.500" fill="none" stroke="#fff" strokeWidth="1.400" /><circle cx="15" cy="4.500" r="5" fill="#1665ad" /><path d="M12.500 2.500h5v4h-5z" fill="none" stroke="#fff" /></> },
  { name: "Vault", art: <><circle cx="10" cy="10" r="9" fill="#b8c3e4" stroke="#1a2440" strokeWidth="1.200" /><path d="M6 9h8v6H6z" fill="#111a36" /><path d="M7.500 9V6.500a2.500 2.500 0 015 0V9" fill="none" stroke="#111a36" strokeWidth="1.600" /></> },
  { name: "Chrome", run: true, art: <><circle cx="10" cy="10" r="9" fill="#34a853" /><path d="M2.200 5.500A9 9 0 0117.800 5.500H10a4.500 4.500 0 00-4 2.500z" fill="#ea4335" /><path d="M2.200 5.500L6.100 12.200a4.500 4.500 0 003 2L8 19A9 9 0 012.200 5.500z" fill="#34a853" /><path d="M17.800 5.500A9 9 0 019 19l4.500-6.500A4.500 4.500 0 0012 6z" fill="#fbbc04" /><circle cx="10" cy="10" r="4.500" fill="#fff" /><circle cx="10" cy="10" r="3.500" fill="#4285f4" /></> },
  { name: "Instagram", art: <><rect x="1" y="1" width="18" height="18" rx="4.500" fill="url(#ig)" /><rect x="4.500" y="4.500" width="11" height="11" rx="3" fill="none" stroke="#fff" strokeWidth="1.400" /><circle cx="10" cy="10" r="2.700" fill="none" stroke="#fff" strokeWidth="1.400" /><defs><linearGradient id="ig" x1="0" y1="1" x2="1" y2="0"><stop offset="0" stopColor="#fdb13c" /><stop offset=".5" stopColor="#e5325f" /><stop offset="1" stopColor="#9136c9" /></linearGradient></defs></> },
  { name: "Fusion 360", art: null },
  { name: "Spotify", run: true, art: <><circle cx="10" cy="10" r="9" fill="#1ed760" /><path d="M4.500 7q6-2 11.500 1M5 10.300q5-1.700 10 1M5.500 13.300q4-1.300 8 .8" fill="none" stroke="#111" strokeWidth="1.700" /></> },
  { name: "Fusion 360 active", art: null },
];

function Taskbar() {
  return (
    <footer className="flex h-[29px] items-center justify-between border-t border-[#bfc5c3] bg-[linear-gradient(90deg,#e3e5da,#e0e8e2_12%,#ebe4d8_23%,#dfe8e3_30%,#f2e3d6_38%,#f0e4da_50%,#e2e6e0_58%,#dfe7e4_64%,#efe6da_70%,#e0e9e6)] px-2 pb-0.5 font-['Open_Sans',sans-serif] text-[7px] text-[#333]">
      <div className="flex w-[122px] items-center gap-[4px] pl-[3px]">
        <Svg className="size-[15px]"><circle cx="14" cy="6" r="3" fill="#d2e6f5" stroke="#58a6dc" strokeWidth="1.500" strokeDasharray="1.500 1.500" /><path d="M1 11c1-8 13-9 16-1-5-1-10-1-16 1z" fill="#3f98dc" /><path d="M9.500 9v8q-1 3-3 0" fill="none" stroke="#555" strokeWidth="1.400" /></Svg>
        <div className="leading-[9px]"><div>13°C</div><div className="text-[#666]">Pluie imminente</div></div>
      </div>
      <div className="flex items-center">
        <button aria-label="Start"><Svg className="block size-4"><path d="M1 1h8.500v8.500H1zM10.500 1H19v8.500h-8.500zM1 10.500h8.500V19H1zM10.500 10.500H19V19h-8.500z" fill="#1889dc" /></Svg></button>
        <button className="ml-2 flex h-[18px] w-[69px] items-center justify-center gap-[3px] rounded-full bg-[#faf6f3]"><Search className="size-[9px]" />Recherche</button>
        <div className="ml-0.5 flex w-[316px]">
          {apps.map((a) => (
            <div key={a.name} className="flex flex-1 justify-center">
              <button aria-label={a.name} className={`relative flex h-[23px] w-[22px] items-center justify-center rounded-sm ${a.name.endsWith("active") ? "bg-[#fbf8f5]" : ""}`}>
                {a.art ? <Svg className="size-[15px]">{a.art}</Svg> : <FusionLogo className="size-[15px]" />}
                {a.run && <span className="absolute bottom-0 h-px w-1 bg-[#777]" />}
                {a.name.endsWith("active") && <span className="absolute bottom-0 h-0.5 w-2 rounded-full bg-[#0a73c4]" />}
              </button>
            </div>
          ))}
        </div>
      </div>
      <div className="w-[114px] text-right leading-[10px] text-[#555]"><div>22:31</div><div>04/01/2023</div></div>
    </footer>
  );
}

export default function App() {
  return (
    <div className="flex min-h-screen flex-col font-['Liberation_Sans',Arial,sans-serif]">
      <TitleBar />
      <TabBar />
      <Ribbon />
      <Canvas />
      <Taskbar />
    </div>
  );
}
